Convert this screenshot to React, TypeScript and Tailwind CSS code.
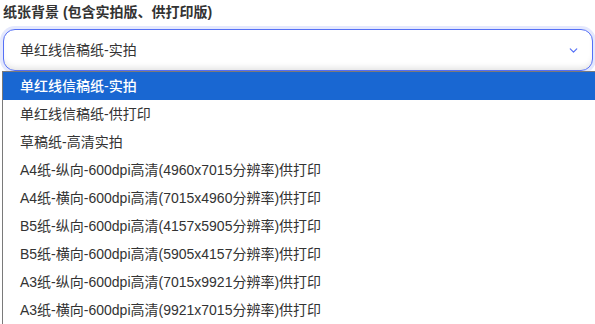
import { ChevronDown } from "lucide-react";

const options = [
  "单红线信稿纸-实拍",
  "单红线信稿纸-供打印",
  "草稿纸-高清实拍",
  "A4纸-纵向-600dpi高清(4960x7015分辨率)供打印",
  "A4纸-横向-600dpi高清(7015x4960分辨率)供打印",
  "B5纸-纵向-600dpi高清(4157x5905分辨率)供打印",
  "B5纸-横向-600dpi高清(5905x4157分辨率)供打印",
  "A3纸-纵向-600dpi高清(7015x9921分辨率)供打印",
  "A3纸-横向-600dpi高清(9921x7015分辨率)供打印",
];

export default function App() {
  const selected = 0;

  return (
    <div
      className="relative h-[324px] w-[595px] overflow-hidden bg-white text-[#333]"
      style={{ fontFamily: '"Liberation Sans", "Noto Sans CJK SC", sans-serif' }}
    >
      <div className="pl-[3px] pr-[2px] pt-[3px]">
        <label className="block h-[18px] text-[14px] font-bold leading-[18px] text-[#333]">
          纸张背景 (包含实拍版、供打印版)
        </label>

        {/* select box, focused */}
        <div className="mt-[8px] flex h-[42px] items-center justify-between rounded-[12px] border border-[#5570f6] bg-white pl-[16px] pr-[12px] shadow-[0_0_0_3px_#e4e8fd,inset_0_-5px_6px_-3px_rgba(0,0,0,0.12)]">
          <span className="text-[14px] text-[#333]">{options[selected]}</span>
          <ChevronDown className="h-[13px] w-[13px] text-[#5570f6]" strokeWidth={2.2} />
        </div>
      </div>

      {/* native-style dropdown list */}
      <div className="absolute left-[2px] right-0 top-[71px] border-l border-t border-[#7a7a7a] bg-white">
        {options.map((opt, i) => (
          <div
            key={opt}
            className={
              i === selected
                ? "flex h-[28px] items-center bg-[#1967d2] pl-[17px] text-[14px] font-medium text-white"
                : "flex h-[28px] items-center pl-[17px] text-[14px] text-[#333]"
            }
          >
            {opt}
          </div>
        ))}
      </div>
    </div>
  );
}
